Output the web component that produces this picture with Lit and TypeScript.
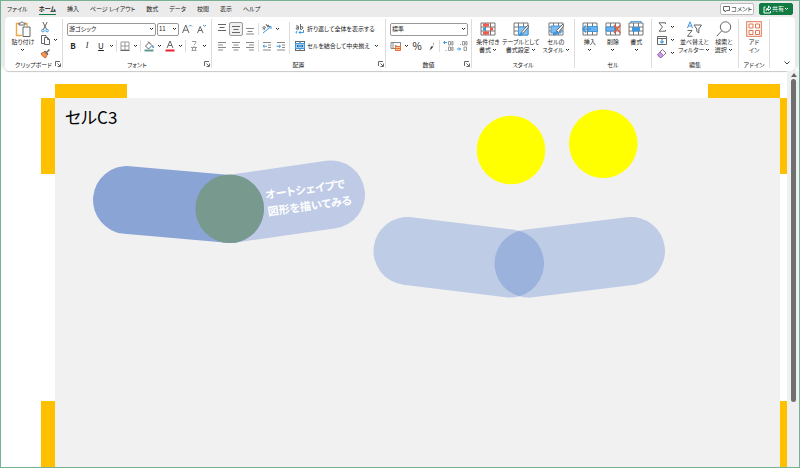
import { LitElement, html, svg, css, nothing } from "lit";
import type { TemplateResult } from "lit";
import { customElement, property } from "lit/decorators.js";

const ink = "#666";
const blue = "#3f97de";

/* Small toolbar glyphs, drawn on a 12 x 12 grid. */
const small: Record<string, TemplateResult> = {
  cut: svg`<path d="M3.8 1 7.6 8.4M8.2 1 4.4 8.4" stroke=${ink}/><circle cx="3.9" cy="9.6" r="1.3" stroke=${blue}/><circle cx="8.1" cy="9.6" r="1.3" stroke=${blue}/>`,
  copy: svg`<path d="M5 9.500H2.500V1.500H7V3" stroke=${ink}/><path d="M5.500 3.500H8.500L10.500 5.500V10.500H5.500ZM8.500 3.500V5.500H10.500" stroke=${ink} fill="#fff"/>`,
  brush: svg`<path d="M2 6.500 6 4.500 8.500 7 6.500 11Q3 9.500 2 6.500Z" fill="#f0975a" stroke="#d8632a"/><path d="M5.500 4 9 7.500M7.500 5.500 10.500 2.500" stroke=${ink} stroke-width="1.500"/>`,
  borders: svg`<path d="M2 2H10V10H2ZM6 2V10M2 6H10" stroke="#999"/><path d="M1.500 10.500H10.500" stroke=${ink}/>`,
  fill: svg`<path d="M2.500 6 6 2.500 9 5.500 5.500 9ZM5 1.500 7 3.500" stroke=${ink}/><path d="M9.500 5.500 10.500 8" stroke=${blue} stroke-width="1.500"/><path d="M1.500 10.500H10.500" stroke="#5d9a94" stroke-width="2"/>`,
  fontColor: svg`<path d="M3 8 6 1 9 8M4.200 5.500H7.800" stroke=${ink}/><path d="M1.500 10.500H10.500" stroke="#e8202a" stroke-width="2"/>`,
  phonetic: svg`<path d="M4 1.500H8Q8 3.500 6 5" stroke="#999"/><path d="M6 6V7.500M3 7.500H9M3.500 10.500H8.500M4.500 8V10M7.500 8V10" stroke="#999"/>`,
  grow: svg`<path d="M1.500 10 4.800 2 8 10M2.700 7.200H7" stroke=${ink}/><path d="M8 3.500 9.500 2 11 3.500" stroke=${blue}/>`,
  shrink: svg`<path d="M2.500 10 5.200 3.500 8 10M3.500 7.500H7" stroke=${ink}/><path d="M8 2 9.500 3.500 11 2" stroke=${blue}/>`,
  top: svg`<path d="M2 1.500H10M3.500 4.500H8.500M2 7.500H10" stroke=${ink}/>`,
  middle: svg`<path d="M2 3.500H10M3.500 6.500H8.500M2 9.500H10" stroke=${ink}/>`,
  bottom: svg`<path d="M2 5.500H10M3.500 8.500H8.500M2 11H10" stroke="#888"/>`,
  left: svg`<path d="M2 2.500H10M2 5H7M2 7.500H10M2 10H7" stroke="#888"/>`,
  center: svg`<path d="M2 2.500H10M3.500 5H8.500M2 7.500H10M3.500 10H8.500" stroke="#888"/>`,
  right: svg`<path d="M2 2.500H10M5 5H10M2 7.500H10M5 10H10" stroke="#888"/>`,
  orient: svg`<path d="M2 10 9.500 4M7 3.500H10V6" stroke=${blue}/><path d="M1.500 4.500 3.500 7M2 4Q4 2.500 4.500 5L3 6M5 1 7 4.500M6 3Q8 1 8 3.500" stroke=${ink}/>`,
  outdent: svg`<path d="M2 2.500H10M7 5H10M7 7.500H10M2 10H10" stroke="#888"/><path d="M6 6.250H2M3.500 4.800 2 6.250 3.500 7.700" stroke=${blue}/>`,
  indent: svg`<path d="M2 2.500H10M7 5H10M7 7.500H10M2 10H10" stroke="#888"/><path d="M1.500 6.250H5.500M4 4.800 5.500 6.250 4 7.700" stroke=${blue}/>`,
  wrap: svg`<path d="M2 3Q4.500 2 4.500 4V6.500M4.500 4.500Q2 4.300 2 5.800 3 7 4.500 5.500M6.500 1V6.500M6.500 4Q9 2.500 9 5 8 7.200 6.500 6" stroke=${ink}/><path d="M3.500 8Q2 8 2 10H3M9.500 7V9.500H5M6.500 8 5 9.500 6.500 11" stroke=${blue}/>`,
  merge: svg`<rect x="1.500" y="1.500" width="9" height="9" stroke=${ink} fill="#fff"/><path d="M6 1.500V3M6 9V10.500" stroke=${ink}/><rect x="1.500" y="3.500" width="9" height="5" fill="#a5d2f5" stroke=${blue}/><path d="M3 6H9M4.200 5 3 6 4.200 7M7.800 5 9 6 7.800 7" stroke="#1666ab"/>`,
  currency: svg`<path d="M1 2.500H10.500V8.500H1ZM3 3V8.500M5 5.500H6.500" stroke="#888"/><path d="M5.500 6.500H10.500V10.500H5.500ZM5.500 8.500H10.500" stroke="#e8702a" fill="#f9c7a5"/>`,
  comma: svg`<path d="M6 2A2.300 2.300 0 1 1 6 6.500Q5.800 8.500 4 10.500 8.500 8.500 8.400 4.300A2.300 2.300 0 0 0 6 2Z" fill="#333"/>`,
  decimalUp: svg`<path d="M5 2.500H1.500M3 1 1.500 2.500 3 4" stroke=${blue}/><path d="M6.500 1.500H8.500V5H6.500ZM9.800 1.500H11V5H9.800ZM6.500 7H8.500V10.500H6.500ZM9.800 7H11V10.500H9.800ZM4 10V11" stroke="#999"/>`,
  decimalDown: svg`<path d="M1 9H4.500M3 7.500 4.500 9 3 10.500" stroke=${blue}/><path d="M6.500 1.500H8.500V5H6.500ZM9.800 1.500H11V5H9.800ZM8 7H10.500V10.500H8ZM4.500 4V5" stroke="#999"/>`,
  sum: svg`<path d="M9.500 3V1.800H3L6.500 6 3 10.200H9.500V9" stroke=${ink}/>`,
  down: svg`<path d="M1.500 2.500H10.500V10.500H1.500ZM1.500 4.500H10.500" stroke=${ink}/><path d="M6 5V9M4.300 7.300 6 9 7.700 7.300" stroke=${blue} stroke-width="1.200"/>`,
  eraser: svg`<path d="M1.500 7.500 6.500 2.500 10 6 5.500 10.500H4Z" stroke="#8a7396" fill="#fff"/><path d="M1.500 7.500 4 5 7.500 8.500 5.500 10.500H4Z" fill="#c79be0" stroke="#a76cc8"/>`,
  comment: svg`<path d="M3.500 3.500H9.500V7.500H6.500L5 9V7.500H3.500Z" stroke=${ink}/>`,
  share: svg`<path d="M4.500 4H3V10H9.500V8" stroke="#fff"/><path d="M5 7.500Q5 5 7.500 5V3L10 5.200 7.500 7.500V6.200Q6 6.200 5 7.500Z" stroke="#fff"/>`,
};

const grid = svg`<path d="M1 2H15V14H1ZM1 6H15M1 10H15M5.500 2V14M10.500 2V14" stroke="#777" fill="#fff"/>`;

/* Large command glyphs, drawn on a 16 x 16 grid. */
const large: Record<string, TemplateResult> = {
  paste: svg`<path d="M4 2.500H1.500V14.500H7" stroke="#eda64a" stroke-width="1.400"/><path d="M10 2.500H12V5" stroke="#eda64a" stroke-width="1.400"/><path d="M4 4V2H5.500Q7 -.5 8.500 2H10V4Z" stroke=${ink} fill="#fff"/><path d="M8 6H15V15.500H8Z" stroke=${ink} fill="#fff"/>`,
  conditional: svg`${grid}<path d="M3 2.500H9V5.500H3ZM3 10.500H9V13.500H3Z" fill="#ef5a4c"/><path d="M3 6.500H6V9.500H3Z" fill=${blue}/><path d="M10 6.500H13V9.500H10Z" fill="#ef5a4c"/>`,
  table: svg`${grid}<path d="M5.500 6H15V14H5.500Z" fill="#8ec4f0" stroke=${blue}/><path d="M15 4 9 10.500 6.500 14.500 10.500 12 15.500 6Z" fill="#fff" stroke=${ink}/><path d="M9 11Q7 11 6 15 9 15 10.500 12.500Z" fill=${blue}/>`,
  cellStyle: svg`${grid}<path d="M3 5H13V12H3Z" fill="#7fbaf0" stroke=${blue}/><path d="M15 3 8.500 9.500 10.500 11.500 15.500 5Z" fill="#fff" stroke=${ink}/><path d="M8.500 10Q6 10.500 5.500 14.500 9 14.500 10.500 12Z" fill=${blue}/>`,
  insert: svg`${grid}<path d="M6 5.500H15.500V10.500H6Z" fill="#6cb2ee" stroke=${blue}/><path d="M9 8H1M4 4.500 .8 8 4 11.500" stroke=${blue} stroke-width="1.500"/>`,
  remove: svg`${grid}<path d="M1 6H9.500V10H1Z" fill="#6cb2ee" stroke=${blue}/><path d="M9 4 15.500 12M15.500 4 9 12" stroke="#e8583c" stroke-width="1.300"/>`,
  format: svg`${grid}<path d="M4 6H12V10.500H4Z" fill=${blue}/><path d="M3 .7H13M3 0V2M13 0V2" stroke=${blue}/>`,
  sort: svg`<path d="M1.500 7 4 .8 6.500 7M2.500 5H5.500" stroke=${blue}/><path d="M1.500 9.500H6L1.500 15.300H6.500" stroke=${ink}/><path d="M8 4H15.500L12.800 8V12L10.800 10.500V8Z" stroke=${ink} fill="#fff"/>`,
  find: svg`<circle cx="9.500" cy="6" r="5.200" stroke=${ink}/><path d="M5.800 9.700 .8 15.200" stroke=${ink}/>`,
  addin: svg`<rect x=".7" y=".7" width="14.600" height="14.600" stroke="#e0764f"/><path d="M3 3H7V7H3ZM9.500 3H13.500V7H9.500ZM3 9.500H7V13.500H3ZM9.500 9.500H13.500V13.500H9.500Z" stroke="#e0764f"/>`,
};

const chevron = html`<svg class="chevron" viewBox="0 0 5 4" aria-hidden="true"><path d="M1 1 2.500 2.500 4 1" fill="none" stroke="currentColor"/></svg>`;

@customElement("x-glyph")
class XGlyph extends LitElement {
  @property() name = "";
  @property({ type: Boolean }) large = false;
  static styles = css`
    :host { display: block; flex: none; }
    svg { display: block; width: 12px; height: 12px; }
    svg.large { width: 16px; height: 16px; }
  `;
  render() {
    return this.large
      ? html`<svg class="large" viewBox="0 0 16 16" fill="none" aria-hidden="true">${large[this.name]}</svg>`
      : html`<svg viewBox="0 0 12 12" fill="none" aria-hidden="true">${small[this.name]}</svg>`;
  }
}

const tool = (name: string, label: string, on = false) =>
  html`<button class="tool ${on ? "on" : ""}" aria-label=${label}><x-glyph name=${name}></x-glyph></button>`;
const more = (label: string) => html`<button class="more" aria-label=${label}>${chevron}</button>`;
const rule = html`<i class="rule"></i>`;

const big = (icon: string, first: string, second = "", menu = true) => html`
  <button class="big">
    <x-glyph large name=${icon}></x-glyph>
    <span class="words"><span>${first}</span><span class="second">${second}${menu ? chevron : nothing}</span></span>
  </button>`;

const picker = (label: string, value: string, cls: string) => html`
  <span class="picker ${cls}"><select aria-label=${label}><option>${value}</option></select>${chevron}</span>`;

const group = (name: string, body: TemplateResult, launcher = false) => html`
  <section class="group" aria-label=${name}>
    <div class="body">${body}</div>
    <footer class="caption">
      <span>${name}</span>
      ${launcher
        ? html`<button class="launcher" aria-label="${name}の設定"><svg viewBox="0 0 6 6" fill="none" stroke="#666"><path d="M.5 5V.5H5M2.500 2.500 5 5M5.500 2.500V5.500H2.500"/></svg></button>`
        : nothing}
    </footer>
  </section>`;

@customElement("app-root")
class AppRoot extends LitElement {
  static styles = css`
    :host {
      display: flex;
      flex-direction: column;
      box-sizing: border-box;
      min-height: 100vh;
      border: 1px solid #78b094;
      background: #fff;
      color: #222;
      font: 6px/8px "Noto Sans CJK JP", "Noto Sans", sans-serif;
      font-feature-settings: "palt";
    }
    button, select {
      font: inherit;
      font-feature-settings: inherit;
      color: inherit;
      background: none;
      border: 0;
      padding: 0;
      margin: 0;
      white-space: nowrap;
    }
    .chevron { width: 5px; height: 4px; flex: none; }

    .top { background: #ebebeb; display: flex; align-items: center; height: 16px; padding: 0 6px; }
    .tabs { display: flex; gap: 11px; flex: 1; }
    .tab { height: 12px; border-bottom: 1px solid transparent; }
    .tab.current { font-weight: 700; border-color: #107c41; }
    .actions { display: flex; gap: 5px; }
    .action {
      display: flex; align-items: center; justify-content: center;
      box-sizing: border-box; width: 34px; height: 12px;
      border: 1px solid #bbb; border-radius: 2px; background: #fff;
    }
    .action x-glyph { margin: 0 -1px 0 -2px; }
    .action.share { background: #107c41; border-color: #107c41; color: #fff; }

    .under { background: linear-gradient(#ebebeb 90%, #fff); padding: 0 4px; }
    .ribbon {
      display: grid;
      grid-template-columns: 58fr 149fr 174fr 86fr 103fr 77fr 87fr 31fr 25fr;
      height: 54px;
      background: #fff;
      border-radius: 4px;
      box-shadow: 0 1px 1px #c8c8c8;
    }
    .group {
      position: relative;
      display: flex; flex-direction: column;
      margin: 2px 0 3px;
      border-right: 1px solid #ddd;
      min-width: 0;
    }
    .body { display: flex; flex: 1; padding: 2px 3px 0; min-width: 0; }
    .caption { display: flex; justify-content: center; position: relative; height: 9px; line-height: 11px; }
    .launcher { position: absolute; right: 1px; top: 2px; width: 6px; height: 6px; }
    .launcher svg { display: block; width: 6px; height: 6px; }

    .rows { display: flex; flex-direction: column; gap: 1px; min-width: 0; }
    .rows.grow { flex: 1; }
    .row { display: flex; align-items: center; height: 16px; }
    .tool { display: flex; justify-content: center; align-items: center; box-sizing: border-box; width: 14px; height: 14px; font-size: 8px; flex: none; }
    .tool.on { border: 1px solid #999; border-radius: 2px; background: #f0f0f0; }
    .tool.bold { font-weight: 700; }
    .tool.italic { font-family: "Liberation Serif", serif; font-style: italic; }
    .tool.underline { text-decoration: underline; }
    .tool.percent { font-size: 10px; }
    .more { display: flex; justify-content: center; width: 7px; flex: none; }
    .rule { width: 1px; height: 12px; margin: 0 1px; background: #ddd; flex: none; }
    .rule.tall { height: 32px; margin-top: 1px; }
    .line { display: flex; align-items: center; gap: 1px; margin: 0 3px; }

    .picker { position: relative; display: flex; align-items: center; height: 13px; box-sizing: border-box; border: 1px solid #999; border-radius: 2px; }
    .picker select { appearance: none; width: 100%; height: 100%; padding: 0 1px; border-radius: 2px; }
    .picker .chevron { position: absolute; right: 1px; pointer-events: none; }
    .wide { flex: 1; margin-left: 1px; }
    .size { width: 22px; margin: 0 1px; }

    .big { display: flex; flex-direction: column; align-items: center; gap: 1px; flex: 1 1 auto; }
    .words { display: flex; flex-direction: column; align-items: center; }
    .second { display: flex; align-items: center; gap: 1px; min-height: 8px; }
    .stack { display: flex; flex-direction: column; gap: 1px; }
    .stack .row { height: 12px; }
    .collapse { align-self: end; justify-self: end; margin: 0 4px 4px; width: 8px; height: 8px; }
    .collapse svg { display: block; width: 8px; height: 8px; }

    .sheet {
      flex: 1;
      display: grid;
      grid-template-columns: 40px 14px minmax(0, 1fr) 7px 12px;
      grid-template-rows: 13px 14px 76px 227px minmax(66px, 1fr);
    }
    .mark { background: #ffc000; }
    .mark.nw, .mark.ne { grid-area: 2 / 3; width: 72px; }
    .mark.ne { justify-self: end; }
    .mark.w { grid-area: 3 / 2; }
    .mark.e { grid-area: 3 / 4; }
    .mark.sw { grid-area: 5 / 2; }
    .mark.se { grid-area: 5 / 4; }
    .cell { grid-area: 3 / 3 / 6 / 4; background: #f1f1f1; position: relative; overflow: hidden; }
    .value { margin: 0; padding: 7px 10px; font-size: 17px; line-height: 24px; font-weight: 400; color: #000; }
    .shapes { position: absolute; left: 0; top: 0; width: 725px; height: 369px; }
    .capsule { stroke: #4471c8; stroke-width: 68; stroke-linecap: round; }
    .faint { stroke-opacity: 0.29; }
    .strong { stroke: #8ba4d6; }
    .pale { stroke: #bfcbe6; }
    .note { fill: #fff; font-size: 11px; font-weight: 700; }
    .scroll { grid-area: 1 / 5 / 6 / 6; background: #f0f0f0; display: flex; flex-direction: column; align-items: center; gap: 2px; padding: 2px 0 0 1px; }
    .scroll svg { display: block; width: 6px; height: 4px; }
    .thumb { width: 5px; height: 82%; border-radius: 3px; background: #707070; }
  `;

  render() {
    const tabs = ["ファイル", "ホーム", "挿入", "ページ レイアウト", "数式", "データ", "校閲", "表示", "ヘルプ"];
    return html`
      <header class="top">
        <nav class="tabs">
          ${tabs.map((t) => html`<button class="tab ${t === "ホーム" ? "current" : ""}">${t}</button>`)}
        </nav>
        <div class="actions">
          <button class="action"><x-glyph name="comment"></x-glyph>コメント</button>
          <button class="action share"><x-glyph name="share"></x-glyph>共有${chevron}</button>
        </div>
      </header>
      <div class="under">
        <div class="ribbon">
          ${group("クリップボード", html`
            ${big("paste", "貼り付け")}
            <div class="stack">
              <div class="row">${tool("cut", "切り取り")}</div>
              <div class="row">${tool("copy", "コピー")}${more("コピーのオプション")}</div>
              <div class="row">${tool("brush", "書式のコピー")}</div>
            </div>`, true)}
          ${group("フォント", html`
            <div class="rows grow">
              <div class="row">
                ${picker("フォント名", "游ゴシック", "wide")}${picker("サイズ", "11", "size")}
                ${tool("grow", "拡大")}${tool("shrink", "縮小")}
              </div>
              <div class="row">
                <button class="tool bold">B</button><button class="tool italic">I</button><button class="tool underline">U</button>${more("下線")}${rule}
                ${tool("borders", "罫線")}${more("罫線の種類")}${rule}
                ${tool("fill", "塗りつぶし")}${more("塗りつぶしの色")}${tool("fontColor", "文字色")}${more("文字色の選択")}${rule}
                ${tool("phonetic", "ふりがな")}${more("ふりがなの設定")}
              </div>
            </div>`, true)}
          ${group("配置", html`
            <div class="rows">
              <div class="row">${tool("top", "上揃え")}${tool("middle", "上下中央揃え", true)}${tool("bottom", "下揃え")}${rule}${tool("orient", "方向")}${more("方向の選択")}</div>
              <div class="row">${tool("left", "左揃え")}${tool("center", "中央揃え")}${tool("right", "右揃え")}${rule}${tool("outdent", "インデントを減らす")}${tool("indent", "インデントを増やす")}</div>
            </div>
            <i class="rule tall"></i>
            <div class="rows grow">
              <div class="row"><button class="line"><x-glyph name="wrap"></x-glyph>折り返して全体を表示する</button></div>
              <div class="row"><button class="line"><x-glyph name="merge"></x-glyph>セルを結合して中央揃え</button>${more("結合の種類")}</div>
            </div>`, true)}
          ${group("数値", html`
            <div class="rows grow">
              <div class="row">${picker("表示形式", "標準", "wide")}</div>
              <div class="row">${tool("currency", "通貨")}${more("通貨の選択")}<button class="tool percent">%</button>${tool("comma", "桁区切り")}${rule}${tool("decimalUp", "小数点以下を増やす")}${tool("decimalDown", "小数点以下を減らす")}</div>
            </div>`, true)}
          ${group("スタイル", html`${big("conditional", "条件付き", "書式")}${big("table", "テーブルとして", "書式設定")}${big("cellStyle", "セルの", "スタイル")}`)}
          ${group("セル", html`${big("insert", "挿入")}${big("remove", "削除")}${big("format", "書式")}`)}
          ${group("編集", html`
            <div class="stack">
              <div class="row">${tool("sum", "合計")}${more("合計の種類")}</div>
              <div class="row">${tool("down", "フィル")}${more("フィルの種類")}</div>
              <div class="row">${tool("eraser", "クリア")}${more("クリアの種類")}</div>
            </div>
            ${big("sort", "並べ替えと", "フィルター")}${big("find", "検索と", "選択")}`)}
          ${group("アドイン", big("addin", "アド", "イン", false))}
          <button class="collapse" aria-label="リボンを折りたたむ"><svg viewBox="0 0 8 8" fill="none" stroke="#444"><path d="M1.500 2.500 4 5 6.500 2.500"/></svg></button>
        </div>
      </div>
      <main class="sheet">
        <i class="mark nw"></i><i class="mark ne"></i><i class="mark w"></i><i class="mark e"></i><i class="mark sw"></i><i class="mark se"></i>
        <div class="cell">
          <p class="value">セルC3</p>
          <svg class="shapes" viewBox="55 98 725 369" fill="none">
            <path class="capsule pale" d="M230 209 331 194.500"/>
            <path class="capsule strong" d="M127 200 230 209"/>
            <circle cx="229.700" cy="208.700" r="34.300" fill="#78998e"/>
            <g transform="translate(266 199) rotate(-8)"><text class="note">オートシェイプで</text><text class="note" y="17">図形を描いてみる</text></g>
            <path class="capsule faint" d="M407.500 251 510 263.500"/>
            <path class="capsule faint" d="M631 251 528.500 263.500"/>
            <circle cx="511" cy="150" r="34.300" fill="#ff0"/>
            <circle cx="603.300" cy="143.700" r="34.300" fill="#ff0"/>
          </svg>
        </div>
        <div class="scroll" role="scrollbar" aria-label="縦スクロール">
          <svg viewBox="0 0 6 4"><path d="M3 0 6 4H0Z" fill="#666"/></svg>
          <i class="thumb"></i>
        </div>
      </main>
    `;
  }
}
